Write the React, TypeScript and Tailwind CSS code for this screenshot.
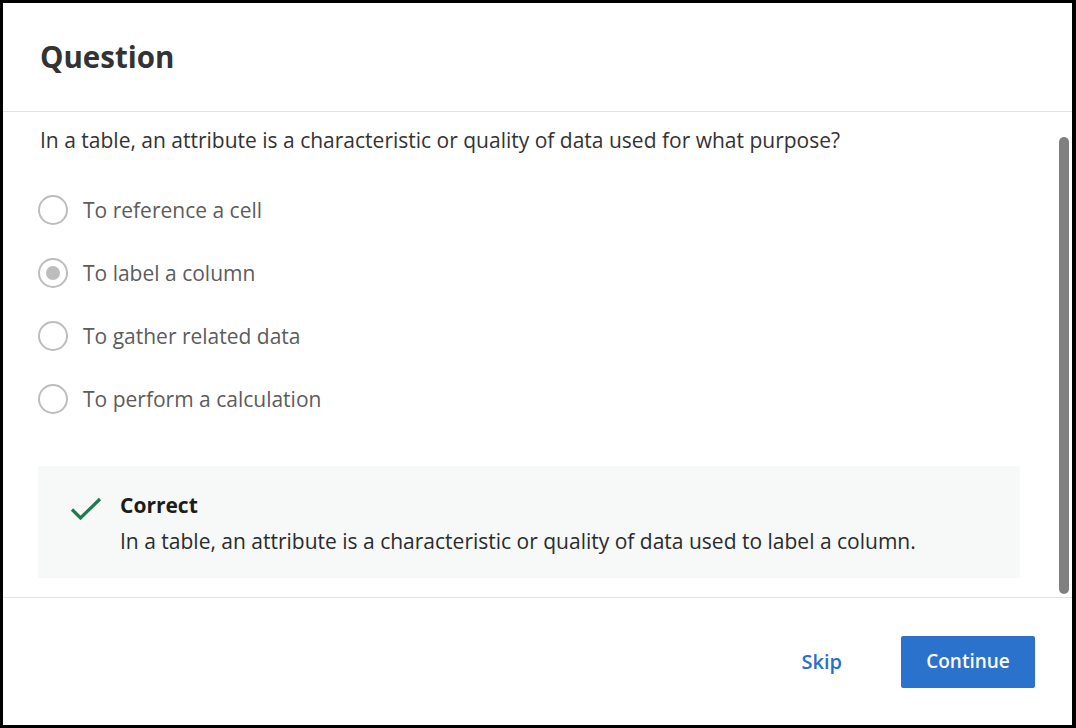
import React, { useState } from "react";

const options = [
  "To reference a cell",
  "To label a column",
  "To gather related data",
  "To perform a calculation",
];

function Radio({ checked }: { checked: boolean }) {
  return (
    <span className="flex h-[30px] w-[30px] shrink-0 items-center justify-center rounded-full border-2 border-[#bdbdbd] bg-white">
      {checked && <span className="h-[14px] w-[14px] rounded-full bg-[#bdbdbd]" />}
    </span>
  );
}

export default function App() {
  const [selected] = useState(1);

  return (
    <div
      className="flex h-[728px] w-[1076px] flex-col border-b-[3px] border-l-[3px] border-r-[4px] border-t-[3px] border-black bg-white"
      style={{ fontFamily: '"Open Sans", "Noto Sans", sans-serif' }}
    >
      {/* header */}
      <div className="flex h-[109px] shrink-0 items-center border-b border-[#e3e3e3] pl-[37px]">
        <h1 className="text-[29.5px] font-bold leading-none text-[#333333]">Question</h1>
      </div>

      {/* body */}
      <div className="flex min-h-0 flex-1 border-b border-[#e3e3e3]">
        <div className="flex-1 pl-[35px] pr-[39px] pt-[14px]">
          <p className="pl-[2px] text-[21px] leading-[28px] text-[#333333]">
            In a table, an attribute is a characteristic or quality of data used for what purpose?
          </p>

          <div className="mt-[24px] flex flex-col">
            {options.map((opt, i) => (
              <label key={opt} className="flex h-[63px] items-center gap-[15px]">
                <Radio checked={i === selected} />
                <span className="text-[21px] leading-[28px] text-[#5c5c5c]">{opt}</span>
              </label>
            ))}
          </div>

          <div className="mt-[36px] flex bg-[#f6f9f8] pb-[23px] pl-[32px] pt-[25px]">
            <svg width="32" height="24" viewBox="0 0 32 24" className="mt-[6px] shrink-0">
              <path d="M2 12.5 L10.5 21 L30 2" fill="none" stroke="#1f7a52" strokeWidth="3.2" />
            </svg>
            <div className="ml-[18px]">
              <div className="text-[21px] font-bold leading-[28px] text-[#1c1c1c]">Correct</div>
              <div className="mt-[8px] text-[21px] leading-[28px] text-[#2b2b2b]">
                In a table, an attribute is a characteristic or quality of data used to label a column.
              </div>
            </div>
          </div>
        </div>

        {/* scrollbar */}
        <div className="w-[13px] shrink-0 pb-[3px] pr-[3px] pt-[25px]">
          <div className="h-full w-[10px] rounded-full bg-[#808080]" />
        </div>
      </div>

      {/* footer */}
      <div className="flex h-[127px] shrink-0 items-center justify-end pr-[37px]">
        <button className="mr-[43px] px-[16px] text-[20px] font-semibold leading-[28px] text-[#2a6fc9]">
          Skip
        </button>
        <button className="h-[52px] w-[134px] rounded-[2px] bg-[#2b72cc] text-[19px] font-semibold text-white">
          Continue
        </button>
      </div>
    </div>
  );
}
